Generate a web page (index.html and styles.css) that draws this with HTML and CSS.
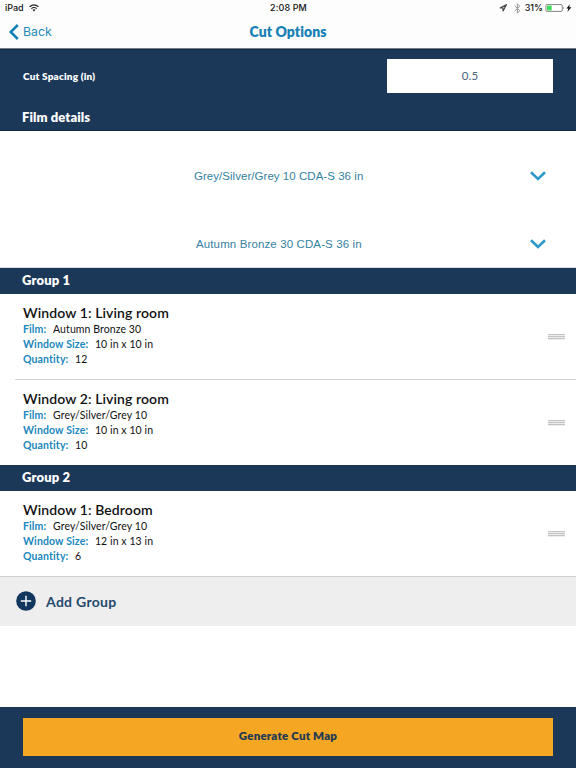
FILE: index.html
```html
<!DOCTYPE html>
<html lang="en">
<head>
<meta charset="utf-8">
<title>Cut Options</title>
<link rel="stylesheet" href="styles.css">
</head>
<body>
<div class="app">
  <div class="status">
    <div class="status-left"><span>iPad</span>
      <svg width="10" height="8" viewBox="0 0 10 8" fill="none" stroke="#222" stroke-width="1.2"><path d="M.6 2.8Q5-1 9.4 2.8M2.3 4.6Q5 2.4 7.7 4.6"/><path d="M3.5 5.7Q5 4.7 6.5 5.7L5 7.4Z" fill="#222" stroke="none"/></svg>
    </div>
    <span class="time">2:08 PM</span>
    <div class="status-right">
      <svg width="8" height="8" viewBox="0 0 8 8" fill="none" stroke="#444" stroke-width="1.1"><path d="M7.3.8.9 4H4v3.2Z"/></svg>
      <svg class="bt" width="7" height="11" viewBox="0 0 7 11" fill="none" stroke="#999" stroke-width="1"><path d="M.8 3 5.8 7.8 3.4 10V1L5.8 3.2.8 8"/></svg>
      <span class="pct">31%</span>
      <svg width="27" height="8" viewBox="0 0 27 8"><rect x=".9" y=".6" width="16.4" height="6.8" rx="1.3" fill="#fff" stroke="#777" stroke-width=".9"/><rect x="2" y="1.6" width="4.7" height="4.8" fill="#3fdb5c"/><path d="M18.2 2.5q1.2 1.5 0 3Z" fill="#555"/><path d="M24.8.3 21.4 4.5h2l-1 3.4L26.4 3.3h-2.2Z" fill="#111"/></svg>
    </div>
  </div>
  <header class="nav">
    <div class="back"><svg width="11" height="16" viewBox="0 0 11 16" fill="none" stroke="#1380b5" stroke-width="2.5"><path d="M9.8 1 2.7 8l7.1 7"/></svg><span>Back</span></div>
    <h1>Cut Options</h1>
  </header>
  <section class="settings">
    <div class="spacing"><label>Cut Spacing (in)</label><div class="field">0.5</div></div>
    <h2 class="film-title">Film details</h2>
  </section>
  <section class="films">
    <div class="film first"><span class="film-one">Grey/Silver/Grey 10 CDA-S 36 in</span><svg width="16" height="10" viewBox="0 0 16 10" fill="none" stroke="#2e9aca" stroke-width="2.6"><path d="M1 1.2 8 8 15 1.2"/></svg></div>
    <div class="film"><span class="film-two">Autumn Bronze 30 CDA-S 36 in</span><svg width="16" height="10" viewBox="0 0 16 10" fill="none" stroke="#2e9aca" stroke-width="2.6"><path d="M1 1.2 8 8 15 1.2"/></svg></div>
  </section>
  <h2 class="group">Group 1</h2>
  <article class="window">
    <h3>Window 1: Living room</h3>
    <p><b>Film:</b><span>Autumn Bronze 30</span></p>
    <p><b>Window Size:</b><span>10 in x 10 in</span></p>
    <p><b>Quantity:</b><span>12</span></p>
    <i class="grip"></i>
  </article>
  <hr>
  <article class="window">
    <h3>Window 2: Living room</h3>
    <p><b>Film:</b><span>Grey/Silver/Grey 10</span></p>
    <p><b>Window Size:</b><span>10 in x 10 in</span></p>
    <p><b>Quantity:</b><span>10</span></p>
    <i class="grip"></i>
  </article>
  <h2 class="group">Group 2</h2>
  <article class="window">
    <h3>Window 1: Bedroom</h3>
    <p><b>Film:</b><span>Grey/Silver/Grey 10</span></p>
    <p><b>Window Size:</b><span>12 in x 13 in</span></p>
    <p><b>Quantity:</b><span>6</span></p>
    <i class="grip"></i>
  </article>
  <div class="add"><svg width="20" height="20" viewBox="0 0 20 20"><circle cx="10" cy="10" r="9.8" fill="#12375f"/><path d="M10 4.8v10.4M4.8 10h10.4" stroke="#fff" stroke-width="1.4"/></svg><span>Add Group</span></div>
  <footer><div class="generate"><span>Generate Cut Map</span></div></footer>
</div>
</body>
</html>
```

FILE: styles.css
```css
* { box-sizing: border-box; }
body { margin: 0; background: #fff; font-family: Lato, sans-serif; color: #111; }
h1, h2, h3, p { margin: 0; }
svg { display: block; flex: none; }
span, label, b { white-space: nowrap; }
.app { width: 576px; height: 768px; display: flex; flex-direction: column; overflow: hidden; }
.status { height: 16px; display: grid; grid-template-columns: 1fr auto 1fr; align-items: center; padding: 0 4px 0 5px; font: 500 9px/16px Inter, sans-serif; background: #fdfdfd; }
.status-left, .status-right { display: flex; align-items: center; }
.status-left { gap: 5px; }
.status-right { justify-content: flex-end; }
.bt { margin: 0 4px 0 7px; }
.pct { margin-right: 2px; }
.time { letter-spacing: .1px; }
.nav { height: 33px; position: relative; border-bottom: 1px solid #777f7f; background: #fdfdfd; }
.back { display: flex; align-items: center; gap: 4px; height: 32px; padding-left: 8px; font: 12.3px/32px Inter, sans-serif; color: #278bb9; }
.nav h1 { position: absolute; left: 0; right: 0; top: 0; text-align: center; font-size: 14px; line-height: 31px; font-weight: 800; color: #1780b4; letter-spacing: .05px; }
.settings { height: 82px; background: #1c3859; color: #fff; border-top: 1px solid #11284b; border-bottom: 1px solid #11284b; }
.spacing { display: flex; justify-content: space-between; align-items: center; height: 52px; padding: 0 23px; font-size: 10px; font-weight: 800; letter-spacing: .17px; }
.field { width: 166px; height: 34px; background: #fff; color: #49647e; font-size: 11.5px; font-weight: 400; line-height: 34px; text-align: center; }
.film-title { font-size: 13px; font-weight: 800; line-height: 30px; padding-left: 22px; letter-spacing: .1px; }
.films { height: 137px; border-bottom: 1px solid #d5d9df; }
.film { height: 46px; display: flex; align-items: center; padding: 0 30px 0 0; font: 11.5px "Liberation Sans", sans-serif; color: #35819f; }
.film svg { margin-left: auto; }
.film.first { height: 90px; }
.film-one { margin-left: 194px; letter-spacing: .04px; }
.film-two { margin-left: 196px; letter-spacing: .12px; }
.group { height: 26px; background: #1c3859; color: #fff; font-size: 13px; line-height: 25px; font-weight: 800; padding-left: 22px; letter-spacing: .15px; }
.window { position: relative; height: 85px; padding: 11px 0 0 23px; }
.window h3 { font-size: 14px; line-height: 16px; margin-bottom: 1px; font-weight: 600; letter-spacing: .1px; }
.window p { display: flex; gap: 6.7px; font-size: 10.5px; line-height: 15px; letter-spacing: .08px; }
.window b { color: #2087bd; font-weight: 700; letter-spacing: .13px; }
.grip { position: absolute; left: 548px; top: 40px; width: 17px; height: 6px; background: repeating-linear-gradient(#c3c3c6 0 1px, #ededee 1px 2px); }
hr { width: 561px; height: 1px; margin: 0 0 0 15px; border: 0; background: #d6d6d7; }
.add { display: flex; align-items: center; gap: 10px; height: 50px; padding: 0 0 2px 16px; background: #eee; border-top: 1px solid #cfcfcf; color: #24496d; font-size: 14px; font-weight: 700; letter-spacing: .3px; }
.add span { padding-top: 1px; }
footer { height: 61px; margin-top: auto; padding: 11px 23px; background: #1c3859; }
.generate { height: 38px; background: #f5a623; color: #213953; text-align: center; font-size: 11.5px; line-height: 36px; font-weight: 800; letter-spacing: .2px; }
```
